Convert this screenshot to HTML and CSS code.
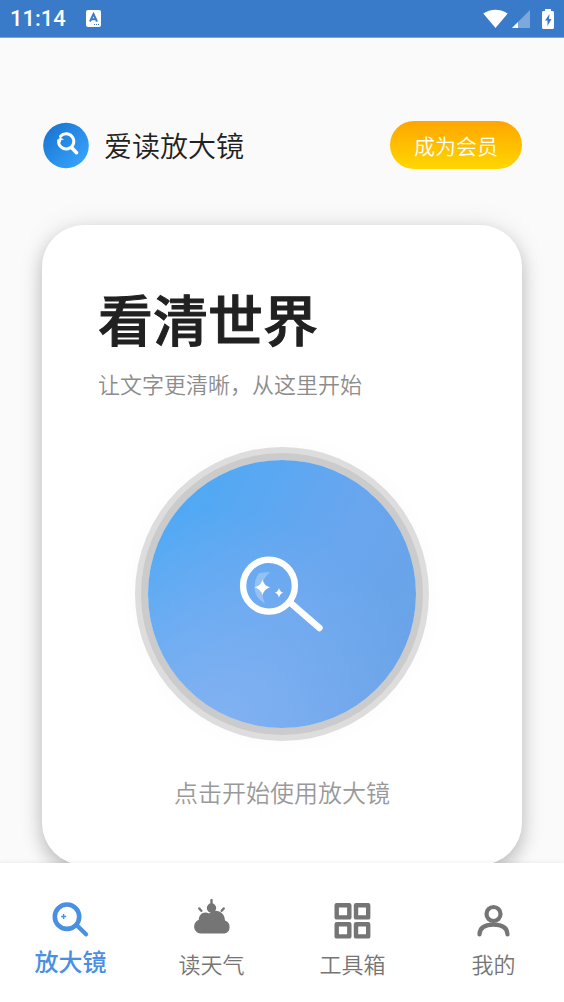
FILE: index.html
```html
<!DOCTYPE html>
<html lang="zh-CN">
<head>
<meta charset="utf-8">
<meta name="viewport" content="width=device-width, initial-scale=1">
<title>爱读放大镜</title>
<link rel="stylesheet" href="styles.css">
</head>
<body>
<div class="app">
  <div class="status">
    <span class="status-time">11:14</span>
    <svg class="status-note" width="15" height="17" viewBox="0 0 15 17" aria-hidden="true">
      <rect width="15" height="17" rx="2" fill="#fff"/>
      <path d="M4 11.500 7.500 4 11 11.500M5.300 9.200h4.400" fill="none" stroke="#397bc9" stroke-width="2"/>
      <path d="M8 14.500h1M10 14.500h1M12 14.500h1" stroke="#397bc9"/>
    </svg>
    <div class="status-right">
      <svg width="25" height="20" viewBox="0 0 25 20" aria-hidden="true"><path d="M12.500 19 .3 4.500C7-.6 18-.6 24.700 4.500z" fill="#fff"/></svg>
      <svg width="18" height="20" viewBox="0 0 18 20" aria-hidden="true"><path d="M18 1v18H0z" fill="#7da8dc"/><path d="M6 13v6H0z" fill="#fff"/></svg>
      <svg class="battery" width="12" height="20" viewBox="0 0 12 20" aria-hidden="true"><path d="M3 0h6v2h2l1 1v16l-1 1H1l-1-1V3l1-1h2z" fill="#fff"/><path d="M7.500 5 3 11.500h2.500V17L9.500 10H7z" fill="#397bc9"/></svg>
    </div>
  </div>

  <main class="content">
    <header class="header">
      <div class="brand">
        <svg width="48" height="48" viewBox="0 0 48 48" aria-hidden="true">
          <defs><linearGradient id="logo" x1="0" y1="0" x2="1" y2="1"><stop offset=".1" stop-color="#1976d2"/><stop offset=".85" stop-color="#35a0fa"/></linearGradient></defs>
          <circle cx="24" cy="24.500" r="22.800" fill="url(#logo)"/>
          <g fill="none" stroke="#fff" stroke-linecap="round">
            <path d="M18.500 15.300a7.600 7.600 0 1 1-1.900 4.500" stroke-width="3"/>
            <path d="m29.500 26.500 5 5.200" stroke-width="3.600"/>
          </g>
          <path d="m18.500 14.500.9 2.800 2.800.9-2.800.9-.9 2.800-.9-2.800-2-.9 2-.9z" fill="#fff"/>
        </svg>
        <h1 class="brand-name">爱读放大镜</h1>
      </div>
      <button class="member" type="button">成为会员</button>
    </header>

    <section class="card">
      <h2 class="card-title">看清世界</h2>
      <p class="card-sub">让文字更清晰，从这里开始</p>
      <button class="lens" type="button" aria-label="放大镜">
        <svg width="96" height="96" viewBox="0 0 96 96" aria-hidden="true">
          <path d="M36 26 25 27Q20.500 33 20.500 42 21 52 31 57.500 27.500 49 27.500 42 28 33 36 26z" fill="#fff" opacity=".28"/>
          <g fill="none" stroke="#fff" stroke-width="6.400" stroke-linecap="round"><circle cx="35" cy="39.700" r="25.900"/><path d="M55.500 56 85.500 82"/></g>
          <path d="M28.500 33.500Q30 40 36 41.300 30 43 28.500 49.500 27 43 20.500 41.300 27 40 28.500 33.500zM45 42Q46 46 49.400 46.700 46 47.500 45 51.500 44 47.500 40.600 46.700 44 46 45 42z" fill="#fff"/>
        </svg>
      </button>
      <p class="card-hint">点击开始使用放大镜</p>
    </section>
  </main>

  <nav class="tabs">
    <a class="tab active" href="#lens" aria-current="page">
      <svg width="42" height="42" viewBox="0 0 42 42" aria-hidden="true"><g fill="none" stroke="currentColor" stroke-linecap="round"><circle cx="17" cy="17.700" r="12.200" stroke-width="4.600"/><path d="m27.500 27 8.500 8.300" stroke-width="4.400"/></g><path d="M13.600 15v5M11.100 17.500h5" stroke="currentColor" stroke-width="1.400"/></svg>
      <span>放大镜</span>
    </a>
    <a class="tab" href="#weather">
      <svg width="42" height="42" viewBox="0 0 42 42" aria-hidden="true"><path d="M10.200 34.600A7.100 7.100 0 0 1 7.800 20.800C8 15 13 12 18 14.500 24 8.500 34 12.500 34 21.500A6.900 6.900 0 0 1 33.700 34.600z" fill="currentColor"/><circle cx="20.500" cy="9" r="4.700" fill="currentColor"/><path d="M20.500 1v10M8.300 9.500l2 2.300M32.700 9.500l-2 2.300" stroke="currentColor" stroke-width="2.400" stroke-linecap="round"/></svg>
      <span>读天气</span>
    </a>
    <a class="tab" href="#tools">
      <svg width="42" height="42" viewBox="0 0 42 42" aria-hidden="true"><g fill="none" stroke="currentColor" stroke-width="4.400" stroke-linejoin="round"><path d="M4.700 6.200h12.600v12.200H4.700zM24 6.200h12.200v12.200H24zM4.700 25.200h12.600v12.200H4.700zM24 25.200h12.200v12.200H24z"/></g></svg>
      <span>工具箱</span>
    </a>
    <a class="tab" href="#mine">
      <svg width="42" height="42" viewBox="0 0 42 42" aria-hidden="true"><g fill="none" stroke="currentColor" stroke-width="4.200" stroke-linecap="round"><circle cx="20.500" cy="15" r="7"/><path d="M6.500 35.500C6.700 28.500 12.700 25.700 20.500 25.700s13.800 2.800 14 9.800"/></g></svg>
      <span>我的</span>
    </a>
  </nav>
</div>
</body>
</html>
```

FILE: styles.css
```css
* { box-sizing: border-box; }

body {
  margin: 0;
  background: #fafafa;
  color: #212121;
  font-family: "Noto Sans CJK SC", sans-serif;
  font-weight: 350;
}

h1, h2, p { margin: 0; font-weight: 350; }

button {
  border: 0;
  padding: 0;
  font: inherit;
  cursor: pointer;
}

svg { display: block; flex: none; }

.app {
  display: flex;
  flex-direction: column;
  height: 100vh;
}

.status {
  display: flex;
  flex: none;
  align-items: center;
  height: 38px;
  padding: 0 10px;
  border-bottom: 1px solid #79a6dc;
  background: #397bc9;
  color: #fff;
}

.status-time {
  font: 500 22px/38px Roboto, sans-serif;
}

.status-note { margin-left: 20px; }

.status-right {
  display: flex;
  gap: 4px;
  margin-left: auto;
}

.battery { margin-left: 8px; }

.content {
  flex: 1;
  min-height: 0;
  padding: 83px 42px 0;
  overflow: hidden;
}

.header {
  display: flex;
  align-items: center;
  justify-content: space-between;
  margin-bottom: 56px;
}

.brand {
  display: flex;
  align-items: center;
  gap: 14px;
}

.brand-name {
  font-size: 28px;
  line-height: 40px;
}

.member {
  height: 48px;
  padding: 0 24px;
  border-radius: 24px;
  background: linear-gradient(#ffa500, #ffd700);
  color: #fff;
  font-size: 21px;
}

.card {
  display: flex;
  flex-direction: column;
  padding: 54px 56px 55px;
  border-radius: 42px;
  background: #fff;
  box-shadow: 0 8px 18px rgba(0, 0, 0, 0.22), 0 0 28px rgba(0, 0, 0, 0.08);
}

.card-title {
  font-size: 55px;
  font-weight: 500;
  line-height: 76px;
  -webkit-text-stroke: 1px currentColor;
}

.card-sub {
  margin-top: 12px;
  color: #8c8c8c;
  font-size: 22px;
  line-height: 32px;
}

.lens {
  display: grid;
  place-items: center;
  align-self: center;
  width: 268px;
  height: 268px;
  margin: 61px 0 46px;
  border-radius: 50%;
  background:
    radial-gradient(circle at 25% 100%, #82b2f2, rgba(130, 178, 242, 0) 65%),
    linear-gradient(120deg, #4ea9f5 10%, #68a6ee 55%, #6ba2e5);
  box-shadow: 0 0 0 7px #cbcbcb, 0 0 0 13px #ddd, 0 0 24px 14px rgba(0, 0, 0, 0.02);
}

.card-hint {
  color: #999;
  font-size: 24px;
  line-height: 36px;
  text-align: center;
}

.tabs {
  display: flex;
  flex: none;
  position: relative;
  padding: 36px 0 23px;
  background: #fff;
  box-shadow: 0 -1px 4px rgba(0, 0, 0, 0.06);
}

.tab {
  display: flex;
  flex: 1;
  flex-direction: column;
  align-items: center;
  gap: 6px;
  color: #757575;
  font-size: 22px;
  line-height: 32px;
  text-decoration: none;
}

.tab.active {
  color: #4a90e2;
  font-size: 24px;
  font-weight: 500;
  line-height: 28px;
}
```
